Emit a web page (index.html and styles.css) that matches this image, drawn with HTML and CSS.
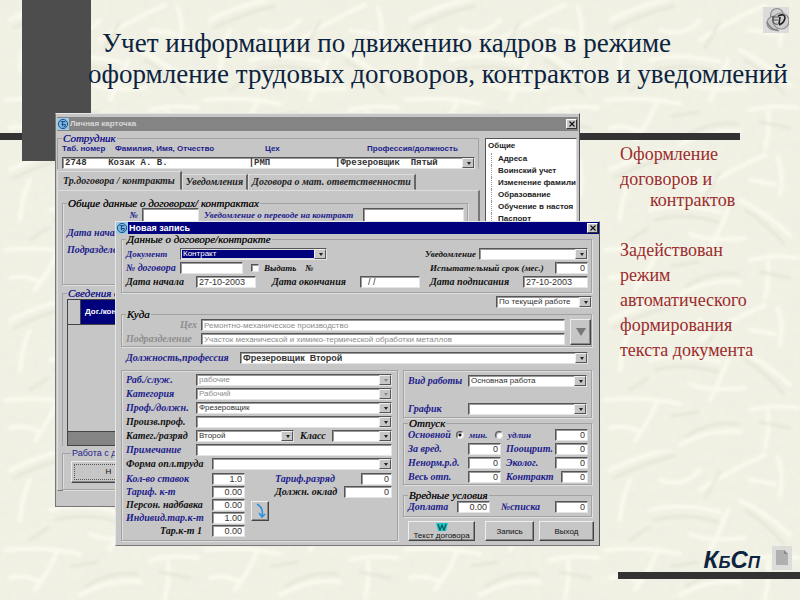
FILE: index.html
```html
<!DOCTYPE html>
<html lang="ru">
<head>
<meta charset="utf-8">
<title>Учет информации по движению кадров</title>
<link rel="stylesheet" href="styles.css">
</head>
<body>
<div class="slide">
  <svg class="texture" aria-hidden="true">
    <defs>
      <filter id="soft" x="0" y="0" width="100%" height="100%"><feGaussianBlur stdDeviation="1.6"/></filter>
      <filter id="mottle" x="0" y="0" width="100%" height="100%">
        <feTurbulence type="fractalNoise" baseFrequency="0.12" numOctaves="3" seed="8"/>
        <feColorMatrix values="0 0 0 0 .86  0 0 0 0 .86  0 0 0 0 .79  1.6 0 0 0 -.5"/>
      </filter>
      <pattern id="fibres" width="200" height="150" patternUnits="userSpaceOnUse">
        <g fill="none" stroke="#fdfdf1" stroke-opacity=".8" stroke-width="4" stroke-linecap="round">
          <path d="M10 20Q40 5 75 -2M100 40Q130 20 165 5M20 70Q22 45 30 30M50 60Q80 52 120 62M5 100Q45 96 80 104M110 100Q120 80 128 60M140 50Q165 62 190 85M150 110Q175 104 198 108M35 140Q50 120 58 100M80 145Q110 128 140 132M165 148Q170 130 168 112M60 30Q85 38 100 20M180 45Q184 25 178 8M90 84Q110 92 145 88M10 128Q25 124 40 132M150 30L175 34"/>
        </g>
        <g fill="none" stroke="#e2e2d3" stroke-opacity=".7" stroke-width="3" stroke-linecap="round">
          <path d="M14 28Q42 14 74 6M55 70Q85 62 118 72M145 60Q165 72 184 94M86 136Q112 120 138 124M30 90L48 78M120 22L105 48M160 122L190 128M72 116L98 112"/>
        </g>
      </pattern>
    </defs>
    <rect width="100%" height="100%" fill="#f1f1e4"/>
    <rect width="100%" height="100%" filter="url(#mottle)"/>
    <rect width="100%" height="100%" fill="url(#fibres)" filter="url(#soft)"/>
  </svg>
  <div class="rule-top"></div>
  <div class="block"></div>
  <svg class="emblem" viewBox="0 0 26 26" aria-hidden="true">
    <rect width="26" height="26" fill="#dcdcda"/>
    <g fill="none" stroke="#8c8c8c" stroke-width="1.2">
      <circle cx="14" cy="8" r="6.5" fill="#d0d0d0"/><circle cx="11" cy="16" r="7" fill="#c8c8c8"/><circle cx="18" cy="14" r="8" fill="#cfcfcf"/>
    </g>
    <path d="M9 10h7M9 13h6M10 9v6q2 3 5 2" fill="none" stroke="#555" stroke-width="1.2"/>
    <path d="M15 9q7-3 7 2-1 5-6 7M17 10l-1 7" fill="none" stroke="#222" stroke-width="1.6"/>
    <path d="M4 15q4 8 12 9" fill="none" stroke="#777" stroke-width="1.2"/>
  </svg>

  <header class="heading">
    <h1>Учет информации по движению кадров в режиме<br>оформление трудовых договоров, контрактов и уведомлений</h1>
  </header>

  <main class="content">
    <div class="desktop">
      <section class="window card">
        <div class="titlebar inactive">
          <svg class="app" viewBox="0 0 13 13" aria-hidden="true"><rect width="13" height="13" fill="#9cc8e4"/><circle cx="6.5" cy="6.5" r="5" fill="#7db8e0" stroke="#174a80"/><path d="M4 4h5M5 7h4q1 2-2 3M6 4v5" fill="none" stroke="#124080"/></svg>
          <span class="name">Личная карточка</span>
          <button class="close" type="button" aria-label="Закрыть"><svg viewBox="0 0 8 8"><path d="M1.5 1.5l5 5M6.5 1.5l-5 5" stroke="#111" stroke-width="1.2"/></svg></button>
        </div>
        <div class="card-body">
          <div class="card-main">
            <fieldset class="employee">
              <legend class="blue">Сотрудник</legend>
              <div class="employee-heads"><label for="emp">Таб. номер</label><span>Фамилия, Имя, Отчество</span><span>Цех</span><span>Профессия/должность</span></div>
              <div class="combo"><select id="emp" class="mono"><option>2748&nbsp;&nbsp;&nbsp;&nbsp;Козак&nbsp;А.&nbsp;В.&nbsp;&nbsp;&nbsp;&nbsp;&nbsp;&nbsp;&nbsp;&nbsp;&nbsp;&nbsp;&nbsp;&nbsp;&nbsp;&nbsp;&nbsp;|РМП&nbsp;&nbsp;&nbsp;&nbsp;&nbsp;&nbsp;&nbsp;&nbsp;&nbsp;&nbsp;&nbsp;&nbsp;|Фрезеровщик&nbsp;&nbsp;Пятый</option></select></div>
            </fieldset>
            <nav class="tabs">
              <button type="button" class="tab current">Тр.договора / контракты</button><button type="button" class="tab">Уведомления</button><button type="button" class="tab">Договора о мат. ответственности</button>
            </nav>
            <div class="panel">
              <fieldset class="common">
                <legend>Общие данные о договорах/ контрактах</legend>
                <div class="common-row">
                  <label class="blue end" for="cn">№</label><input id="cn">
                  <label class="blue" for="cu">Уведомление о переводе на контракт</label><input id="cu">
                </div>
                <p class="blue note">Дата начал</p>
                <p class="blue note">Подразделен</p>
              </fieldset>
              <fieldset class="info">
                <legend class="blue">Сведения о</legend>
                <table class="sheet">
                  <thead><tr><th class="mark"></th><th>Дог./кон</th></tr></thead>
                  <tbody><tr><td colspan="2"></td></tr></tbody>
                  <tfoot><tr><td colspan="2"></td></tr></tfoot>
                </table>
              </fieldset>
              <fieldset class="work">
                <legend>Работа с да</legend>
                <button type="button" class="push">Н</button>
              </fieldset>
            </div>
          </div>
          <ul class="tree">
            <li class="root">Общие</li><li>Адреса</li><li>Воинский учет</li><li>Изменение фамили</li><li>Образование</li><li>Обучение в настоя</li><li>Паспорт</li>
          </ul>
        </div>
      </section>

      <section class="window record">
        <div class="titlebar">
          <svg class="app" viewBox="0 0 13 13" aria-hidden="true"><rect width="13" height="13" fill="#9cc8e4"/><circle cx="6.5" cy="6.5" r="5" fill="#7db8e0" stroke="#174a80"/><path d="M4 4h5M5 7h4q1 2-2 3M6 4v5" fill="none" stroke="#124080"/></svg>
          <span class="name">Новая запись</span>
          <button class="close" type="button" aria-label="Закрыть"><svg viewBox="0 0 8 8"><path d="M1.5 1.5l5 5M6.5 1.5l-5 5" stroke="#111" stroke-width="1.2"/></svg></button>
        </div>
        <form class="record-body">
          <fieldset class="box">
            <legend>Данные о договоре/контракте</legend>
            <div class="row r-doc">
              <label class="blue small" for="doc">Документ</label>
              <div class="combo picked"><select id="doc"><option>Контракт</option></select></div>
              <label class="small col4" for="uv">Уведомление</label>
              <div class="combo"><select id="uv"><option></option></select></div>
            </div>
            <div class="row r-num">
              <label class="blue" for="num">№ договора</label><input id="num">
              <label class="small check"><input type="checkbox">Выдать&nbsp;&nbsp;&nbsp; №</label>
              <label class="small" for="srok">Испытательный срок (мес.)</label><input id="srok" class="num" value="0">
            </div>
            <div class="row r-date">
              <label for="d1">Дата начала</label><input id="d1" value="27-10-2003">
              <label class="col4" for="d2">Дата окончания</label><input id="d2" value="  / /">
              <label class="col7" for="d3">Дата подписания</label><input id="d3" value="27-10-2003">
            </div>
          </fieldset>
          <div class="combo current-work"><select aria-label="Работа"><option>По текущей работе</option></select></div>
          <fieldset class="box where">
            <legend>Куда</legend>
            <div class="where-grid">
              <label class="dim end" for="ceh">Цех</label><input id="ceh" class="tiny" disabled value="Ремонтно-механическое производство">
              <label class="dim" for="podr">Подразделение</label><input id="podr" class="tiny" disabled value="Участок механической и химико-термической обработки металлов">
              <button type="button" class="push down" aria-label="Выбрать"><svg viewBox="0 0 10 8"><path d="M0 0h10L5 8z" fill="#777"/></svg></button>
            </div>
          </fieldset>
          <div class="row r-post">
            <label class="blue" for="post">Должность,профессия</label>
            <div class="combo"><select id="post" class="strong"><option>Фрезеровщик&nbsp; Второй</option></select></div>
          </div>
          <div class="halves">
            <div class="group left">
              <div class="row r-left"><label class="blue" for="l1">Раб./служ.</label><div class="combo"><select id="l1" disabled><option>рабочие</option></select></div></div>
              <div class="row r-left"><label class="blue" for="l2">Категория</label><div class="combo"><select id="l2" disabled><option>Рабочий</option></select></div></div>
              <div class="row r-left"><label class="blue" for="l3">Проф./должн.</label><div class="combo"><select id="l3"><option>Фрезеровщик</option></select></div></div>
              <div class="row r-left"><label for="l4">Произв.проф.</label><div class="combo"><select id="l4"><option></option></select></div></div>
              <div class="row r-class"><label for="l5">Катег./разряд</label><div class="combo"><select id="l5"><option>Второй</option></select></div><label class="mid" for="l6">Класс</label><div class="combo"><select id="l6"><option></option></select></div></div>
              <div class="row r-left"><label class="blue" for="l7">Примечание</label><input id="l7"></div>
              <div class="row r-form"><label for="l8">Форма опл.труда</label><div class="combo"><select id="l8"><option></option></select></div></div>
              <div class="rates">
                <label class="blue" for="k1">Кол-во ставок</label><input id="k1" class="num" value="1.0">
                <div class="row extra e1"><label class="blue" for="k6">Тариф.разряд</label><input id="k6" class="num" value="0"></div>
                <label class="blue" for="k2">Тариф. к-т</label><input id="k2" class="num" value="0.00">
                <div class="row extra e2"><label for="k7">Должн. оклад</label><input id="k7" class="num" value="0"></div>
                <label for="k3">Персон. надбавка</label><input id="k3" class="num" value="0.00">
                <button type="button" class="push calc" aria-label="Рассчитать"><svg viewBox="0 0 12 16"><path d="M3 1q7 4 5 12M5 10l3 4 3-3" fill="none" stroke="#2a90e0" stroke-width="1.5"/></svg></button>
                <label class="blue" for="k4">Индивид.тар.к-т</label><input id="k4" class="num" value="1.00">
                <label class="end" for="k5">Тар.к-т 1</label><input id="k5" class="num" value="0.00">
              </div>
            </div>
            <div class="right">
              <div class="group kind">
                <div class="row r-kind"><label class="blue" for="v1">Вид работы</label><div class="combo"><select id="v1"><option>Основная работа</option></select></div></div>
                <div class="row r-kind"><label class="blue" for="v2">График</label><div class="combo"><select id="v2"><option></option></select></div></div>
              </div>
              <fieldset class="box leave">
                <legend>Отпуск</legend>
                <div class="row r-base">
                  <label class="blue" for="o0">Основной</label>
                  <label class="blue small check"><input type="radio" name="leave" checked>мин.</label>
                  <label class="blue small check"><input type="radio" name="leave">удлин</label>
                  <input id="o0" class="num" value="0">
                </div>
                <div class="row r-leave"><label class="blue" for="o1">За вред.</label><input id="o1" class="num" value="0"><label class="blue" for="o2">Поощрит.</label><input id="o2" class="num" value="0"></div>
                <div class="row r-leave"><label class="blue" for="o3">Ненорм.р.д.</label><input id="o3" class="num" value="0"><label class="blue" for="o4">Эколог.</label><input id="o4" class="num" value="0"></div>
                <div class="row r-leave"><label class="blue" for="o5">Весь отп.</label><input id="o5" class="num" value="0"><label class="blue" for="o6">Контракт</label><input id="o6" class="num short" value="0"></div>
              </fieldset>
              <fieldset class="box harm">
                <legend>Вредные условия</legend>
                <div class="row r-harm"><label class="blue" for="h1">Доплата</label><input id="h1" class="num" value="0.00"><label class="blue" for="h2">№списка</label><input id="h2" class="num" value="0"></div>
              </fieldset>
              <div class="actions">
                <button type="button" class="push text"><svg viewBox="0 0 12 8" aria-hidden="true"><path d="M0 0h12l-2 8H2z" fill="#20c8c8"/><path d="M2 1l2 6 2-5 2 5 2-6" fill="none" stroke="#055" stroke-width="1.2"/></svg>Текст договора</button>
                <button type="button" class="push">Запись</button>
                <button type="button" class="push">Выход</button>
              </div>
            </div>
          </div>
        </form>
      </section>
    </div>

    <aside class="notes">
      <p>Оформление</p>
      <p>договоров и<br><span class="indent">контрактов</span></p>
      <p>&nbsp;</p>
      <p>Задействован</p><p>режим</p><p>автоматического</p><p>формирования</p><p>текста документа</p>
    </aside>
  </main>

  <footer class="footer">
    <div class="brand">
      <span class="logo">К<small>Б</small>С<small>П</small></span>
      <svg class="doc-icon" viewBox="0 0 20 24" aria-hidden="true"><rect width="20" height="24" fill="#dcdcda"/><path d="M4 4h8l4 4v11H4z" fill="#b0b0b0"/><path d="M12 4v4h4z" fill="#888"/></svg>
    </div>
    <div class="rule-bottom"></div>
  </footer>
</div>
</body>
</html>
```

FILE: styles.css
```css
* { box-sizing: border-box; }
body { margin: 0; font-family: "Liberation Serif", serif; background: #f0f0e0; }
h1, p, ul { margin: 0; padding: 0; }

.slide { position: relative; min-height: 100vh; overflow: hidden; }
.texture { position: absolute; inset: 0; width: 100%; height: 100%; }
.rule-top { position: absolute; left: 0; top: 133px; right: 60px; height: 7px; background: #333; }
.block { position: absolute; left: 22px; top: 0; width: 69px; height: 161px; background: #4d4d4d; }
.emblem { position: absolute; right: 11px; top: 7px; width: 26px; height: 26px; }

.heading { position: relative; padding: 28px 0 23px 88px; }
.heading h1 { font-size: 27px; line-height: 31px; font-weight: 400; color: #0c2340; text-indent: 14px; white-space: nowrap; }

.content { position: relative; display: flex; gap: 20px; padding-left: 55px; }
.notes { padding-top: 31px; color: #9c2c2c; font-size: 18px; line-height: 21px; white-space: nowrap; }
.notes p { margin-bottom: 4px; }
.indent { padding-left: 30px; }

.footer { position: relative; margin-left: 618px; }
.brand { display: flex; justify-content: flex-end; gap: 12px; padding-right: 8px; height: 26px; }
.logo { font: italic bold 24px/28px "Liberation Sans", sans-serif; color: #0c2340; }
.logo small { font-size: 17px; }
.doc-icon { width: 20px; height: 24px; }
.rule-bottom { height: 7px; background: #333; }

/* Windows */
.desktop { display: grid; grid-template-columns: 545px; align-items: start; }
.window { grid-area: 1 / 1; background: #c6c6c6; border: 1px solid; border-color: #e6e6e6 #555 #777 #e6e6e6; white-space: nowrap; overflow: hidden; }
.card { margin: 0 20px 0 0; padding: 3px 1px 1px; display: flex; flex-direction: column; border-left-color: #777; }
.record { margin: 108px 0 0 60px; position: relative; }
.titlebar { display: flex; align-items: center; gap: 1px; height: 12px; background: #00007c; color: #fff; font: bold 9px/12px "Liberation Sans", sans-serif; }
.titlebar.inactive { height: 14px; background: #848484; color: #d8d8d8; font-size: 8px; }
.app { width: 12px; height: 12px; }
.name { flex: 1; }
.close { width: 11px; height: 10px; margin-right: 1px; padding: 0; display: grid; place-items: center; background: #c6c6c6; border: 1px solid; border-color: #fff #333 #333 #fff; }
.close svg { width: 8px; height: 8px; }

/* Controls */
fieldset { margin: 0; min-width: 0; padding: 0; border: 1px solid #a2a2a2; box-shadow: inset 1px 0 #ddd, 1px 1px #e0e0e0; }
legend { padding: 0 1px; margin-left: 0; font-size: 11px; line-height: 10px; height: 10px; font-style: italic; color: #111; text-shadow: 0 0 #111; }
label, .note { font-size: 10px; line-height: 12px; font-weight: bold; font-style: italic; color: #111; }
.blue { color: #1c1c8c; }
legend.blue { text-shadow: 0 0 #1c1c8c; }
.small { font-size: 9px; }
.dim { color: #8c8c8c; }
.end { text-align: right; padding-right: 4px; }
input, select { font: 9px/10px "Liberation Sans", sans-serif; color: #333; min-width: 0; width: 100%; height: 12px; margin: 0; padding: 0 2px; background: #fff; border: 1px solid; border-color: #555 #e4e4e4 #e4e4e4 #555; border-radius: 0; box-shadow: inset 1px 1px #999; }
input:disabled, select:disabled { color: #8c8c8c; opacity: 1; background: #fff; }
select { appearance: none; display: block; }
.num { text-align: right; }
.tiny, .combo select { font-size: 8px; }
.combo .mono { font: bold 9px/10px "Liberation Mono", monospace; }
.combo .strong { font-weight: bold; font-size: 9px; }
.combo { position: relative; min-width: 0; }
.combo::after { content: ""; position: absolute; right: 1px; top: 1px; bottom: 1px; width: 10px; background: #c6c6c6; border: 1px solid; border-color: #eee #555 #555 #eee; pointer-events: none; }
.combo::before { content: ""; position: absolute; z-index: 1; right: 4px; top: 5px; border: 2px solid transparent; border-top: 3px solid #222; border-bottom: 0; pointer-events: none; }
.combo:has(:disabled)::before { border-top-color: #888; }
.picked select { background: #00007c; color: #fff; box-shadow: inset 0 0 0 1px #ddd; }
.check { display: flex; align-items: center; gap: 5px; }
.check input { appearance: none; flex: none; width: 8px; height: 8px; padding: 0; }
.check input[type="radio"] { border-radius: 50%; }
.check input[type="radio"]:checked { background: radial-gradient(circle, #111 1px, #fff 2px); }
.push { font: 8px/9px "Liberation Sans", sans-serif; color: #111; background: #c6c6c6; padding: 0; border: 1px solid; border-color: #eee #444 #444 #eee; box-shadow: inset -1px -1px #888; }

/* Personal card */
.card-body { flex: 1; display: flex; gap: 5px; }
.card-main { flex: 1; min-width: 0; display: flex; flex-direction: column; padding-top: 2px; }
.employee { margin-right: 1px; padding: 0 3px 0 4px; border-bottom: 0; box-shadow: none; }
.employee-heads { display: grid; grid-template-columns: 53px 150px 102px 1fr; height: 14px; font: bold 8px/12px "Liberation Sans", sans-serif; color: #1c1c8c; }
.employee-heads label { font: inherit; color: inherit; }
.tabs { display: flex; align-items: flex-end; height: 20px; margin-top: 1px; }
.tab { height: 16px; padding: 0 3px; background: #c6c6c6; border: 1px solid; border-color: #ddd #666 #c6c6c6 #ddd; border-right-width: 2px; font: italic bold 10px/14px "Liberation Serif", serif; color: #222; }
.tab.current { height: 19px; padding: 0 5px; }
.panel { flex: 1; padding: 7px 10px 0 4px; border: 1px solid; border-color: #ddd #777 #777 #ddd; border-right-width: 2px; margin-bottom: 14px; display: flex; flex-direction: column; }
.common { padding: 0 3px 0 4px; height: 87px; }
.common-row { display: grid; grid-template-columns: 75px 62px 159px 1fr; align-items: center; }
.common-row label { font-size: 9px; }
.common-row input { height: 14px; }
#cn { width: 57px; }
.common .note { margin-top: 5px; }
.info { padding: 1px 0 0 4px; border-width: 1px 0 0 1px; margin-top: 3px; box-shadow: none; }
.sheet { width: 100%; border-collapse: collapse; }
.sheet th, .sheet td { border: 1px solid #444; padding: 0; }
.sheet th { height: 25px; background: #00007c; color: #fff; font: bold 8px/10px "Liberation Sans", sans-serif; text-align: left; padding-left: 4px; }
.sheet .mark { width: 13px; background: #c6c6c6; padding: 0; }
.sheet tbody td { height: 107px; }
.sheet tfoot td { height: 14px; background: #848484; }
.work { margin-top: 2px; padding: 2px 8px 6px; }
.work legend { font: 9px/10px "Liberation Sans", sans-serif; color: #1c1c8c; text-shadow: none; }
.work .push { width: 75px; height: 22px; outline: 1px dotted #555; outline-offset: -4px; }
.tree { flex: none; width: 92px; margin: 7px 1px 8px 0; list-style: none; background: #fff; border: 1px solid; border-color: #555 #ddd #ddd #555; overflow: hidden; font: bold 8px/12px "Liberation Sans", sans-serif; color: #222; }
.tree li { margin-left: 5px; padding-left: 6px; border-left: 1px dotted #999; }
.tree .root { margin-left: 2px; padding: 0; border: 0; line-height: 14px; }

/* New record */
.record-body { padding: 0 7px 4px 5px; margin: 0; }
.box { padding: 0 3px 0 4px; }
.row { display: grid; align-items: center; height: 14px; }
.record-body > .box:first-child { padding-top: 3px; padding-bottom: 3px; }
.col4 { grid-column: 4; }
.col7 { grid-column: 7; }
.r-doc { grid-template-columns: 54px 147px 1fr 54px 109px; }
.r-num { grid-template-columns: 54px 63px 1fr 125px 33px; }
.r-num .check { padding-left: 8px; }
.r-date { grid-template-columns: 70px 60px 1fr 88px 60px 10px 93px 65px; }
.current-work { width: 96px; margin: 3px 0 1px auto; }
.where { padding-right: 0; padding-bottom: 1px; }
.where-grid { display: grid; grid-template-columns: 75px 1fr 21px; row-gap: 2px; }
.where-grid input { width: calc(100% - 5px); }
.down { grid-area: 1 / 3 / 3 / 4; display: grid; place-items: center; }
.down svg { width: 10px; height: 8px; }
.r-post { grid-template-columns: 114px 1fr; margin: 4px 4px 5px 5px; }
.halves { display: grid; grid-template-columns: 277px 1fr; gap: 5px; }
.group { border: 1px solid #a2a2a2; box-shadow: inset 1px 1px #ddd, 1px 1px #e0e0e0; }
.left { padding: 2px 5px 2px 4px; }
.r-left { grid-template-columns: 70px 1fr; }
.r-class { grid-template-columns: 70px 98px 38px 1fr; }
.mid { padding-left: 6px; }
.r-form { grid-template-columns: 86px 1fr; }
.rates { display: grid; grid-template-columns: 80px 33px 18px 1fr; grid-auto-rows: 13px; column-gap: 6px; align-items: center; padding-top: 1px; }
.rates > label { grid-column: 1; }
.rates > input { grid-column: 2; }
.extra { grid-column: 4; height: 12px; }
.e1 { grid-template-columns: 1fr 31px; }
.e2 { grid-template-columns: 1fr 48px; }
.calc { grid-area: 3 / 3 / 5 / 4; height: 20px; display: grid; place-items: center; }
.calc svg { width: 12px; height: 16px; }
.right { display: flex; flex-direction: column; min-width: 0; }
.kind { padding: 3px 4px 1px; height: 48px; display: flex; flex-direction: column; justify-content: space-between; }
.r-kind { grid-template-columns: 60px 1fr; }
.r-base { grid-template-columns: 48px 39px 1fr 33px; }
.r-leave { grid-template-columns: 60px 33px 1fr 33px; }
.r-leave label:nth-child(3) { padding-left: 5px; }
.short { width: 27px; justify-self: end; }
.harm { margin-top: 5px; padding-bottom: 2px; }
.r-harm { grid-template-columns: 49px 33px 1fr 33px; }
.r-harm label:nth-child(3) { padding-left: 11px; }
.actions { display: grid; grid-template-columns: 72px 49px 55px; gap: 5px; justify-content: end; margin: 4px -2px 0 0; }
.actions .push { height: 20px; }
.text { width: 67px; display: flex; flex-direction: column; align-items: center; justify-content: center; }
.text svg { width: 12px; height: 8px; }
```
